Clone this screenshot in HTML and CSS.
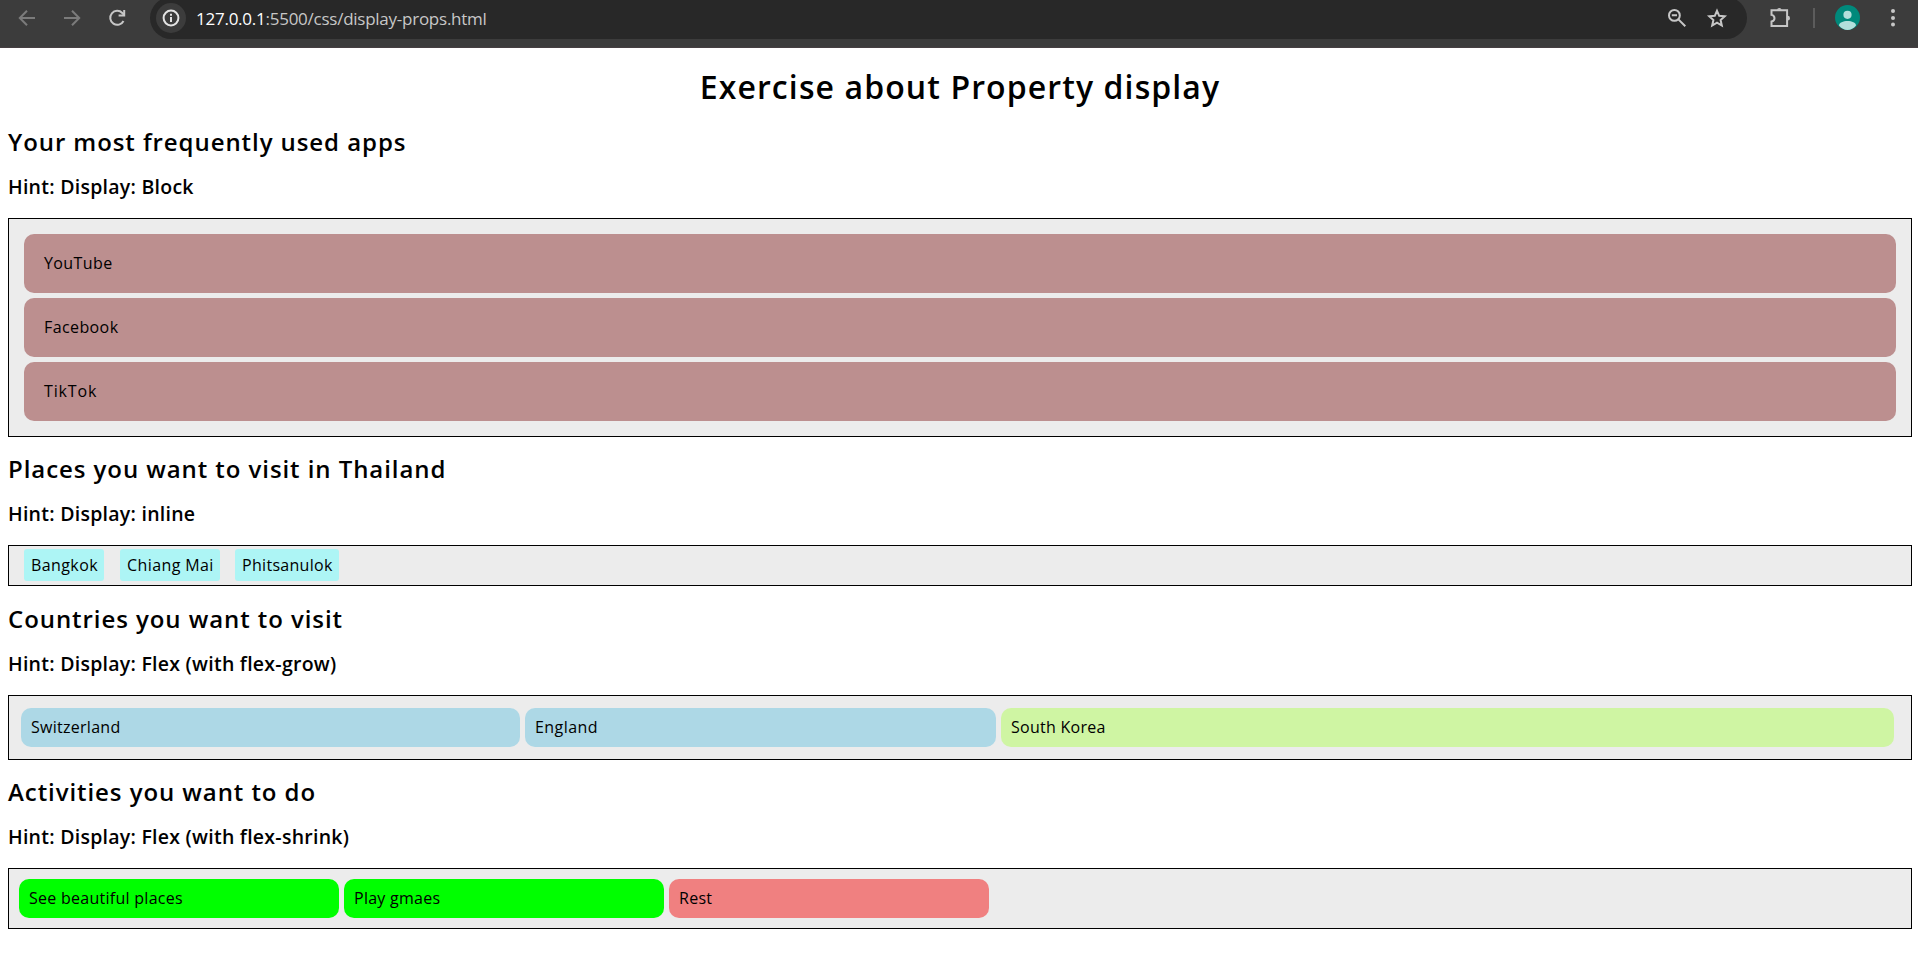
FILE: index.html
```
<!DOCTYPE html>
<html lang="en">
<head>
<meta charset="utf-8">
<title>Exercise about Property display</title>
<link rel="stylesheet" href="styles.css">
</head>
<body>
<header class="toolbar">
  <nav class="nav">
    <svg class="icon dim" viewBox="0 0 24 24"><path d="M20 12H5M12 4.8 4.8 12l7.2 7.2"/></svg>
    <svg class="icon dim" viewBox="0 0 24 24"><path d="M4 12h15M12 4.8l7.2 7.2-7.2 7.2"/></svg>
    <svg class="icon" viewBox="0 0 24 24"><path d="M18.5 15a7 7 0 1 1-1.2-8l2 2"/><path d="M19.2 4v5.4h-5.6"/></svg>
  </nav>
  <div class="omnibox">
    <span class="site-info"><svg viewBox="0 0 20 20"><circle cx="10" cy="10" r="7.4"/><path d="M10 9v5M10 5.8v2"/></svg></span>
    <span class="url"><b>127.0.0.1</b>:5500/css/display-props.html</span>
    <svg class="icon zoom" viewBox="0 0 24 24"><circle cx="9.4" cy="9.4" r="5.4"/><path d="M13.4 13.4l6.9 6.9M6.8 9.3H12"/></svg>
    <svg class="icon star" viewBox="0 0 24 24"><path d="M12 4.8l2.2 5 5.5.5-4.1 3.7 1.2 5.5-4.8-2.9-4.8 2.9 1.2-5.5-4.1-3.7 5.5-.5z"/></svg>
  </div>
  <svg class="icon puzzle" viewBox="0 0 24 24"><path d="M3.5 4.300h15.600v15.800H3.500v-4.600c4-1 4-5.600 0-6.600z"/><path class="solid" d="M8.900 3.800a2.500 2.500 0 0 1 4.800 0zM19.600 9.800a2.400 2.400 0 0 1 0 4.800z"/></svg>
  <span class="divider"></span>
  <svg class="avatar" viewBox="0 0 25 25"><circle cx="12.500" cy="12.500" r="12.500" fill="#00897b"/><circle cx="12.500" cy="9.800" r="4.100" fill="#b2dfdb"/><path d="M4 20.500c0-6 17-6 17 0-2.300 2.800-5.200 4.500-8.500 4.500S6.300 23.300 4 20.500z" fill="#b2dfdb"/></svg>
  <svg class="menu" viewBox="0 0 6 20"><circle cx="3" cy="3" r="2"/><circle cx="3" cy="9.900" r="2"/><circle cx="3" cy="16.600" r="2"/></svg>
</header>
<main>
  <h1>Exercise about Property display</h1>
  <section>
    <h2>Your most frequently used apps</h2>
    <h3>Hint: Display: Block</h3>
    <div class="box apps">
      <div class="app">YouTube</div>
      <div class="app">Facebook</div>
      <div class="app wide">TikTok</div>
    </div>
  </section>
  <section>
    <h2>Places you want to visit in Thailand</h2>
    <h3>Hint: Display: inline</h3>
    <div class="box places">
      <span class="place bangkok">Bangkok</span>
      <span class="place chiang-mai">Chiang Mai</span>
      <span class="place phitsanulok">Phitsanulok</span>
    </div>
  </section>
  <section class="countries-section">
    <h2>Countries you want to visit</h2>
    <h3>Hint: Display: Flex (with flex-grow)</h3>
    <div class="box countries">
      <div class="card switzerland">Switzerland</div>
      <div class="card england">England</div>
      <div class="card korea">South Korea</div>
    </div>
  </section>
  <section>
    <h2>Activities you want to do</h2>
    <h3>Hint: Display: Flex (with flex-shrink)</h3>
    <div class="box activities">
      <div class="card">See beautiful places</div>
      <div class="card">Play gmaes</div>
      <div class="card rest">Rest</div>
    </div>
  </section>
</main>
</body>
</html>
```
FILE: styles.css
```
* { box-sizing: border-box; }

body {
  margin: 0;
  background: #fff;
  color: #000;
  font: 400 16px/18px "Open Sans", "Noto Sans", sans-serif;
  letter-spacing: 0.4px;
}

/* Browser toolbar */
.toolbar {
  display: flex;
  align-items: flex-start;
  height: 48px;
  padding-left: 15px;
  background: #3c3c3c;
  border-bottom: 1px solid #463f42;
  overflow: hidden;
}

.nav { display: flex; gap: 21px; width: 135px; margin-top: 6px; }

.icon {
  flex: none;
  width: 24px;
  height: 24px;
  fill: none;
  stroke: #c7c7c7;
  stroke-width: 2;
}
.icon.dim { stroke: #7b7b7b; }
.icon .solid { fill: #c7c7c7; stroke: none; }

.omnibox {
  display: flex;
  align-items: center;
  width: 1597px;
  height: 42px;
  margin-top: -3px;
  padding-left: 6px;
  border-radius: 21px;
  background: #282828;
}

.site-info {
  display: flex;
  align-items: center;
  justify-content: center;
  width: 30px;
  height: 30px;
  border-radius: 50%;
  background: #3c3c3c;
}
.site-info svg { width: 20px; height: 20px; fill: none; stroke: #e3e3e3; stroke-width: 2; }

.url {
  flex: 1;
  padding: 2px 0 0 10px;
  font-size: 17px;
  line-height: 24px;
  letter-spacing: -0.25px;
  color: #c7c7c7;
  white-space: nowrap;
}
.url b { font-weight: 400; color: #fff; }

.star { margin: 0 18px 0 16px; }
.puzzle { margin: 6px 0 0 21px; }
.divider { width: 2px; height: 20px; margin: 8px 0 0 21px; background: #5c5c5c; }
.avatar { width: 25px; height: 25px; margin: 5px 0 0 20px; }
.menu { width: 6px; height: 20px; margin: 8px 0 0 30px; fill: #c7c7c7; }

/* Page */
main { padding: 19px 6px 0 8px; }

h1, h2, h3 { margin: 0; font-weight: 600; }
h1 {
  margin-bottom: 21px;
  font-size: 32px;
  line-height: 39px;
  letter-spacing: 1.1px;
  text-align: center;
}
h2 { font-size: 24px; line-height: 29px; letter-spacing: 0.93px; }
h3 {
  margin: 20px 0;
  padding-bottom: 1px;
  font-size: 19.5px;
  line-height: 21px;
  letter-spacing: 0.26px;
}

section + section { margin-top: 17px; }
section.countries-section { margin-top: 18px; }

.box { border: 1px solid #000; background: #ececec; }

.apps { display: grid; gap: 5px; padding: 15px; }
.app { padding: 20px 20px 21px; border-radius: 10px; background: #bc8f8f; }
.app.wide { letter-spacing: 0.85px; }

.places { display: flex; gap: 16px; padding: 3px 15px 4px; }
.place { padding: 7px; border-radius: 3px; background: #adf5f5; white-space: nowrap; }
.bangkok { width: 80px; }
.chiang-mai { width: 100px; }
.phitsanulok { width: 104px; margin-left: -1px; letter-spacing: 0.3px; }

.card { padding: 10px 10px 11px; border-radius: 10px; letter-spacing: 0.27px; }

.countries { display: flex; gap: 5px; padding: 12px 17px 12px 12px; }
.countries .card { background: #add8e6; }
.countries .switzerland { width: 499px; }
.countries .england { width: 471px; letter-spacing: 0.45px; }
.countries .korea { flex: 1; background: #cff5a3; }

.activities { display: flex; gap: 5px; padding: 10px; }
.activities .card { width: 320px; background: #00ff00; }
.activities .card.rest { background: #f08080; }
```
